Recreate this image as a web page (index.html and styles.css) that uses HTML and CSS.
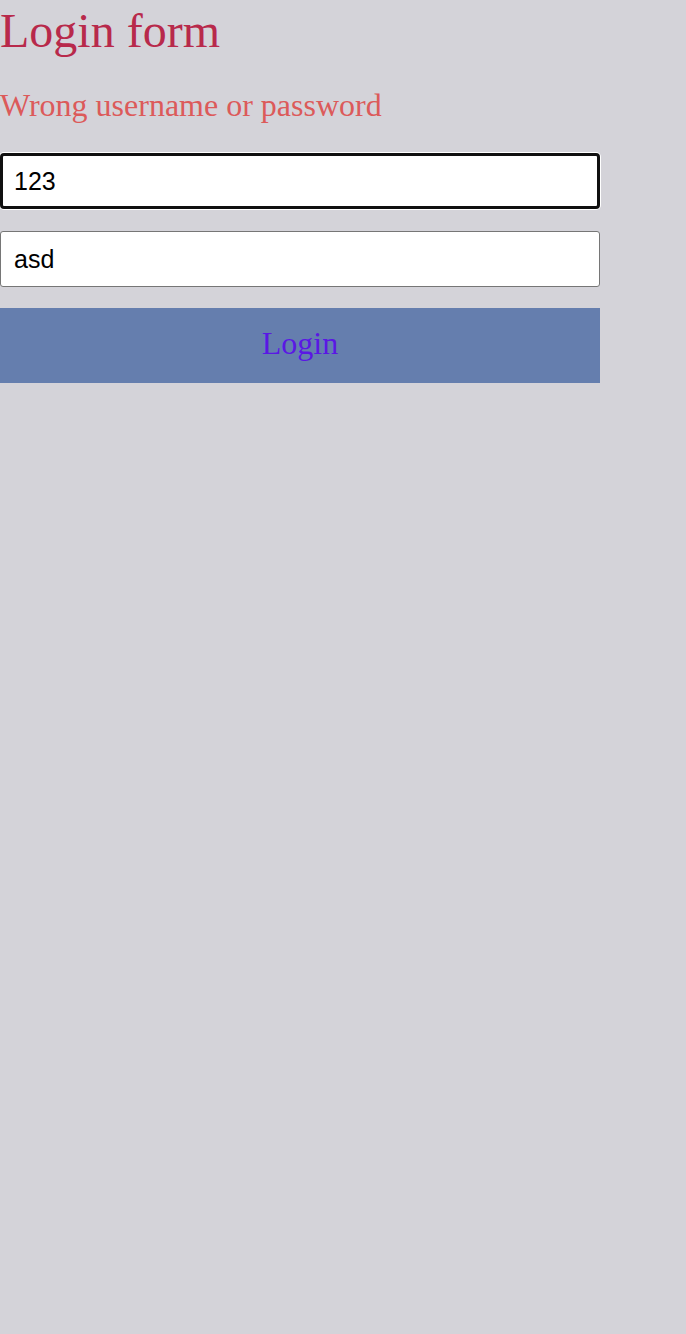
FILE: index.html
```html
<!DOCTYPE html>
<html>
<head>
<meta charset="utf-8">
<link rel="stylesheet" href="styles.css">
</head>
<body>
<form class="login">
  <h1 class="title">Login form</h1>
  <p class="error">Wrong username or password</p>
  <input class="field field-focus" type="text" value="123">
  <input class="field" type="text" value="asd">
  <button class="btn" type="button">Login</button>
</form>
</body>
</html>
```
FILE: styles.css
```css
html, body {
  margin: 0;
  padding: 0;
  background: #d4d3d9;
}
.login {
  display: flex;
  flex-direction: column;
  width: 600px;
  padding-top: 4px;
  font-family: "Liberation Serif", serif;
}
.title {
  margin: 0;
  font-size: 48px;
  font-weight: normal;
  line-height: 53px;
  color: #b8294b;
}
.error {
  margin: 31px 0 0 0;
  font-size: 32px;
  line-height: 35px;
  color: #dc5a5a;
}
.field {
  box-sizing: border-box;
  width: 600px;
  height: 56px;
  margin: 0;
  padding: 0 13px;
  border: 1px solid #767676;
  border-radius: 3px;
  background: #fff;
  font-family: "Liberation Sans", Arial, sans-serif;
  font-size: 25px;
  color: #000;
}
.field-focus {
  margin-top: 30px;
  border: 3px solid #101010;
  padding: 0 11px;
  box-shadow: 0 0 0 1px #fff;
  border-radius: 4px;
}
.field + .field {
  margin-top: 22px;
}
.btn {
  margin-top: 21px;
  width: 600px;
  height: 75px;
  border: none;
  padding: 0 0 5px 0;
  background: #657eae;
  font-family: "Liberation Serif", serif;
  font-size: 32px;
  color: #5a17e4;
}
```
